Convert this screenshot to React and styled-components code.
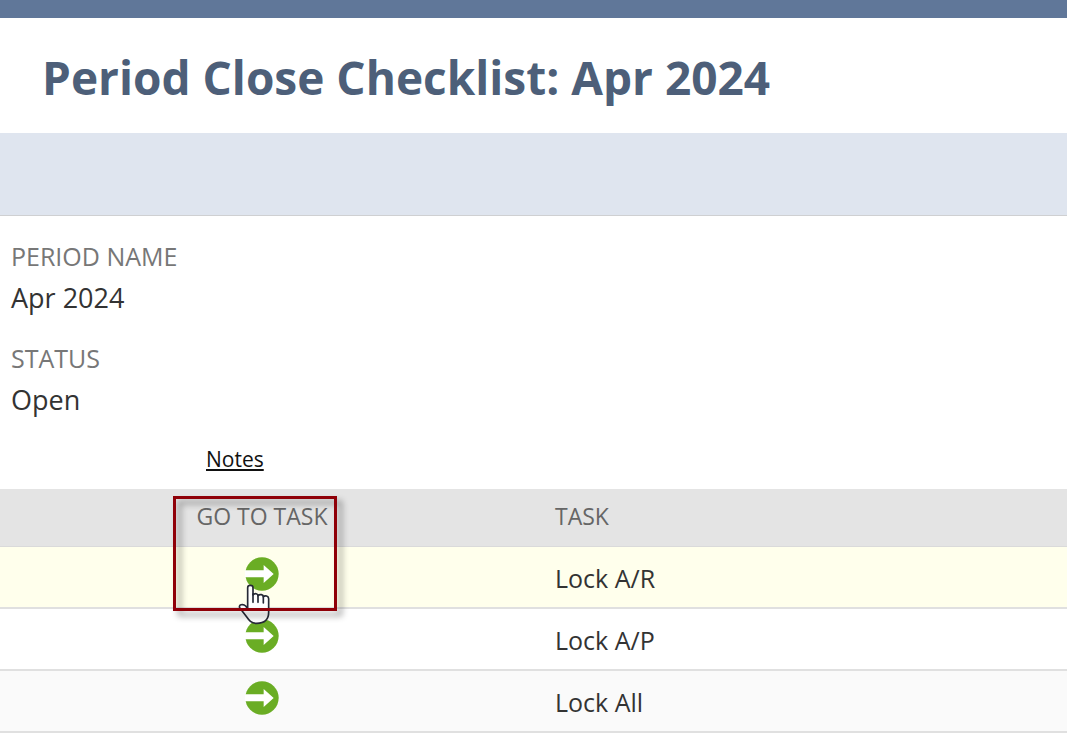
import React from "react";
import styled, { createGlobalStyle } from "styled-components";

const GlobalStyle = createGlobalStyle`
  *, *::before, *::after { box-sizing: border-box; }
  body {
    margin: 0;
    background: #fff;
    color: #333;
    font-family: "Open Sans", "Noto Sans", sans-serif;
  }
`;

const Page = styled.div`
  margin-right: 3px;
`;

const TopBar = styled.div`
  height: 18px;
  background: #607799;
`;

const Header = styled.header`
  padding: 23px 42px 20px;
`;

const Title = styled.h1`
  margin: 0;
  font-size: 46px;
  line-height: 72px;
  font-weight: 700;
  color: #4d5f79;
`;

const ButtonBand = styled.div`
  height: 83px;
  background: #dfe5ef;
  border-bottom: 1px solid #cfd0d2;
`;

const Fields = styled.dl`
  display: flex;
  flex-direction: column;
  gap: 20px;
  margin: 0;
  padding: 20px 11px 0;
`;

const Field = styled.div`
  line-height: 41px;
`;

const FieldLabel = styled.dt`
  font-size: 25px;
  color: #777;
`;

const FieldValue = styled.dd`
  margin: 0;
  font-size: 27px;
  color: #333;
`;

const Tabs = styled.nav`
  padding: 24px 206px 15px;
  font-size: 21px;
  line-height: 30px;
`;

const TabLink = styled.a`
  color: #111;
  text-decoration: underline;
`;

const TaskTable = styled.table`
  width: 100%;
  table-layout: fixed;
  border-collapse: separate;
  border-spacing: 0;
`;

const Column = styled.col`
  width: ${(p) => p.$width};
`;

const HeadCell = styled.th`
  position: relative;
  height: 58px;
  padding: 0 0 4px;
  background: #e4e4e4;
  border-bottom: 1px solid #dadada;
  color: #666;
  font-size: 23px;
  font-weight: 400;
  line-height: 30px;
  text-align: ${(p) => p.$align || "left"};
`;

const Row = styled.tr`
  background: ${(p) => p.$background};
`;

const Cell = styled.td`
  height: 62px;
  padding: 2px 0 0;
  border-bottom: 2px solid #e0e0e0;
  font-size: 25px;
  line-height: 34px;
  text-align: ${(p) => p.$align || "left"};
`;

const GoButton = styled.button`
  display: block;
  width: 34px;
  height: 34px;
  margin: 0 auto 8px;
  padding: 0;
  border: 0;
  background: none;
  cursor: pointer;

  svg { display: block; }
`;

const Highlight = styled.span`
  position: absolute;
  z-index: 2;
  left: -2px;
  top: 7px;
  width: 164px;
  height: 115px;
  border: 3px solid #8f0008;
  filter: drop-shadow(5px 5px 3px rgba(0, 0, 0, 0.4));
  pointer-events: none;
`;

const Pointer = styled.svg`
  position: absolute;
  z-index: 1;
  left: 62px;
  top: 94px;
  pointer-events: none;
`;

function GoIcon() {
  return (
    <svg width="34" height="34" viewBox="0 0 102 102" aria-hidden="true">
      <circle cx="51" cy="51" r="50" fill="#6aad24" />
      <path d="M0 40H56V24L86 51L56 78V61H0Z" fill="#fff" />
    </svg>
  );
}

function HandPointer() {
  return (
    <Pointer width="35" height="43" viewBox="0 0 105 129" aria-hidden="true">
      <path
        d="M32 68V14C32 5 48 5 48 14V36C54 29 63 32 63 38C69 32 79 35 79 41C84 36 95 39 95 47V88C95 110 82 121 59 121C43 121 36 112 27 99L9 76C2 64 19 62 26 69L32 77Z"
        fill="#fff"
        stroke="#262936"
        strokeWidth="5"
        strokeLinejoin="round"
      />
      <path
        d="M48 33V58M63 38V58M79 41V60"
        fill="none"
        stroke="#262936"
        strokeWidth="5"
        strokeLinecap="round"
      />
    </Pointer>
  );
}

const TASKS = [
  { name: "Lock A/R", background: "#ffffec" },
  { name: "Lock A/P", background: "#ffffff" },
  { name: "Lock All", background: "#fafafa" },
];

export default function App() {
  return (
    <>
      <GlobalStyle />
      <Page>
        <TopBar />
        <Header>
          <Title>Period Close Checklist: Apr 2024</Title>
        </Header>
        <ButtonBand />
        <Fields>
          <Field>
            <FieldLabel>PERIOD NAME</FieldLabel>
            <FieldValue>Apr 2024</FieldValue>
          </Field>
          <Field>
            <FieldLabel>STATUS</FieldLabel>
            <FieldValue>Open</FieldValue>
          </Field>
        </Fields>
        <Tabs>
          <TabLink href="#notes">Notes</TabLink>
        </Tabs>
        <TaskTable>
          <colgroup>
            <Column $width="175px" />
            <Column $width="174px" />
            <Column $width="206px" />
            <Column />
          </colgroup>
          <thead>
            <tr>
              <HeadCell />
              <HeadCell $align="center">
                GO TO TASK
                <HandPointer />
                <Highlight />
              </HeadCell>
              <HeadCell />
              <HeadCell>TASK</HeadCell>
            </tr>
          </thead>
          <tbody>
            {TASKS.map((task) => (
              <Row key={task.name} $background={task.background}>
                <Cell />
                <Cell $align="center">
                  <GoButton type="button" aria-label={`Go to ${task.name}`}>
                    <GoIcon />
                  </GoButton>
                </Cell>
                <Cell />
                <Cell>{task.name}</Cell>
              </Row>
            ))}
          </tbody>
        </TaskTable>
      </Page>
    </>
  );
}
